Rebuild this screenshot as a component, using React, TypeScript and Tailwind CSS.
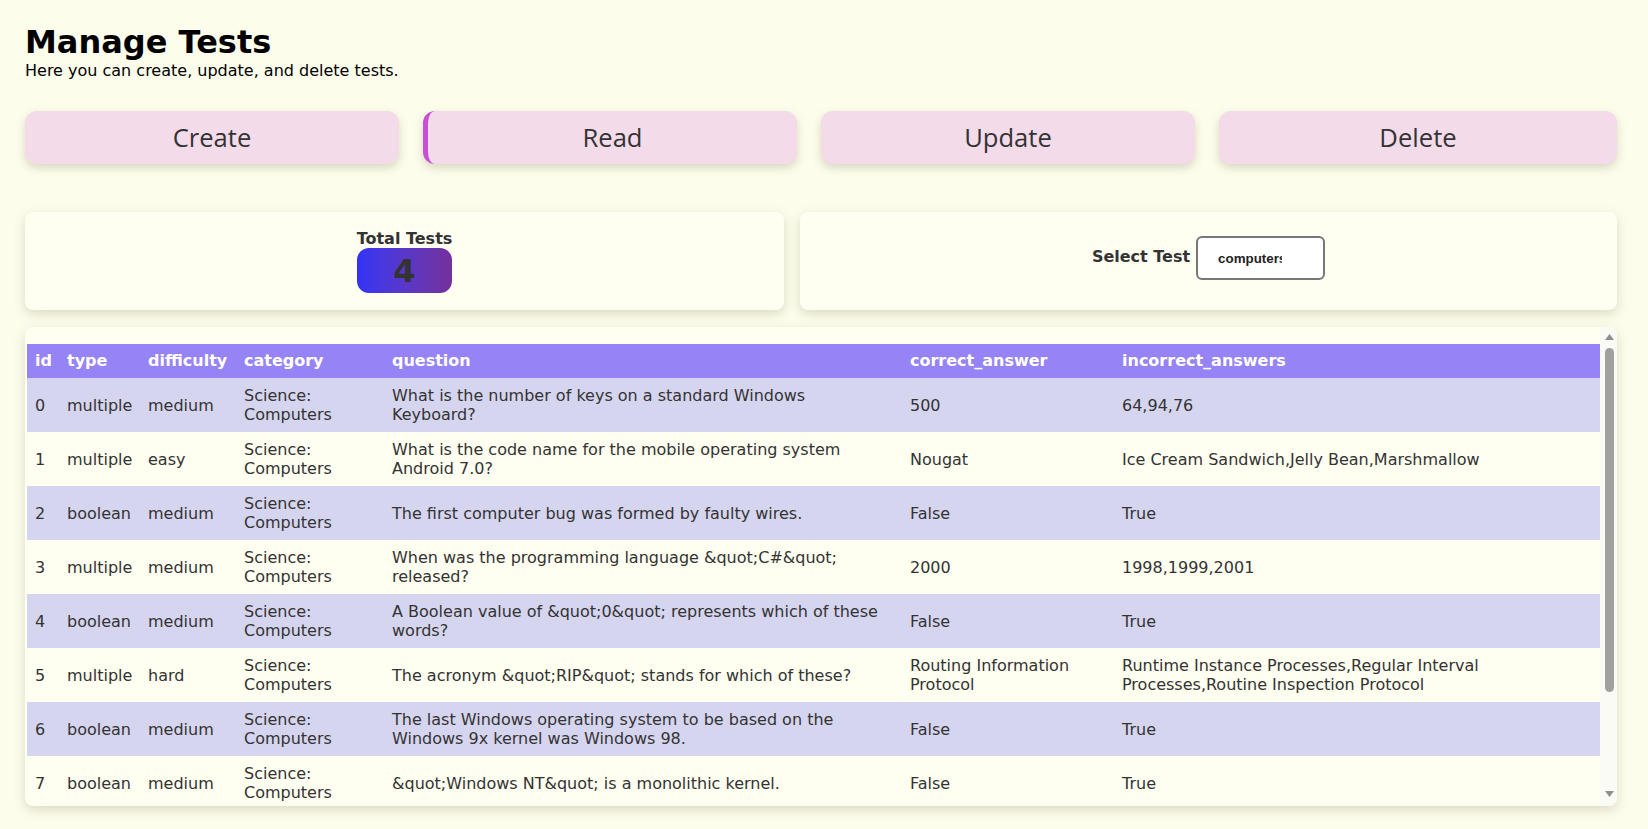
import { useState } from "react";

type Row = {
  id: number;
  type: string;
  difficulty: string;
  category: string;
  question: string;
  correct_answer: string;
  incorrect_answers: string[];
};

const TESTS: Row[] = [
  { id: 0, type: "multiple", difficulty: "medium", category: "Science: Computers", question: "What is the number of keys on a standard Windows Keyboard?", correct_answer: "500", incorrect_answers: ["64", "94", "76"] },
  { id: 1, type: "multiple", difficulty: "easy", category: "Science: Computers", question: "What is the code name for the mobile operating system Android 7.0?", correct_answer: "Nougat", incorrect_answers: ["Ice Cream Sandwich", "Jelly Bean", "Marshmallow"] },
  { id: 2, type: "boolean", difficulty: "medium", category: "Science: Computers", question: "The first computer bug was formed by faulty wires.", correct_answer: "False", incorrect_answers: ["True"] },
  { id: 3, type: "multiple", difficulty: "medium", category: "Science: Computers", question: "When was the programming language &quot;C#&quot; released?", correct_answer: "2000", incorrect_answers: ["1998", "1999", "2001"] },
  { id: 4, type: "boolean", difficulty: "medium", category: "Science: Computers", question: "A Boolean value of &quot;0&quot; represents which of these words?", correct_answer: "False", incorrect_answers: ["True"] },
  { id: 5, type: "multiple", difficulty: "hard", category: "Science: Computers", question: "The acronym &quot;RIP&quot; stands for which of these?", correct_answer: "Routing Information Protocol", incorrect_answers: ["Runtime Instance Processes", "Regular Interval Processes", "Routine Inspection Protocol"] },
  { id: 6, type: "boolean", difficulty: "medium", category: "Science: Computers", question: "The last Windows operating system to be based on the Windows 9x kernel was Windows 98.", correct_answer: "False", incorrect_answers: ["True"] },
  { id: 7, type: "boolean", difficulty: "medium", category: "Science: Computers", question: "&quot;Windows NT&quot; is a monolithic kernel.", correct_answer: "False", incorrect_answers: ["True"] },
  { id: 8, type: "multiple", difficulty: "easy", category: "Science: Computers", question: "What does CPU stand for?", correct_answer: "Central Processing Unit", incorrect_answers: ["Central Process Unit", "Computer Personal Unit", "Central Processor Unit"] },
  { id: 9, type: "boolean", difficulty: "easy", category: "Science: Computers", question: "Linux was first created as an alternative to Windows XP.", correct_answer: "False", incorrect_answers: ["True"] },
];

const ACTIONS = ["Create", "Read", "Update", "Delete"];

export default function App() {
  const [active, setActive] = useState("Read");
  const [search, setSearch] = useState("computers");

  return (
    <div className="h-screen overflow-hidden bg-[#fdfdec] pl-[25px] pr-[31px] pt-[23px] text-[#333] font-['DejaVu_Sans',sans-serif]">
      <h1 className="text-[32px] font-bold leading-[normal] text-black">Manage Tests</h1>
      <p className="text-[16px] leading-[normal] text-black">Here you can create, update, and delete tests.</p>

      <div className="mt-[31px] flex h-[53px] gap-6">
        {ACTIONS.map((a, i) => (
          <button
            key={a}
            onClick={() => setActive(a)}
            className={
              (i === 3 ? "flex-1 " : "w-[374px] ") +
              (active === a ? "border-l-[5px] border-[#c64fd4] " : "") +
              "rounded-xl bg-[#f3dbea] text-[25.6px] leading-[normal] text-[#333] font-['Open_Sans',sans-serif] shadow-[0_4px_10px_rgba(80,80,40,0.22)]"
            }
          >
            {a}
          </button>
        ))}
      </div>

      <div className="mt-[48px] flex h-[98px] gap-4">
        <div className="flex w-[759px] flex-col items-center justify-center rounded-lg bg-[#fefef1] shadow-[0_4px_12px_rgba(80,80,40,0.2)]">
          <div className="flex flex-col items-stretch">
            <span className="text-[16px] font-bold leading-[19px]">Total Tests</span>
            <span className="flex h-[45px] items-center justify-center rounded-xl bg-linear-to-r from-[#3333f6] to-[#742f9c] text-[32px] font-bold leading-none text-[#333]">
              4
            </span>
          </div>
        </div>
        <div className="flex flex-1 items-center justify-center gap-[6px] rounded-lg bg-[#fefef1] pb-[8px] shadow-[0_4px_12px_rgba(80,80,40,0.2)]">
          <label className="text-[16px] font-bold" htmlFor="test-select">Select Test</label>
          <input
            id="test-select"
            value={search}
            onChange={(e) => setSearch(e.target.value)}
            className="mt-[2px] h-[44px] w-[129px] rounded-[6px] border-2 border-[#777] bg-white pl-5 pr-[41px] text-[13.33px] font-semibold text-[#222] font-['Liberation_Sans',sans-serif] outline-none"
          />
        </div>
      </div>

      <div className="relative mt-[17px] h-[479px] overflow-hidden rounded-lg bg-[#fefef1] shadow-[0_4px_12px_rgba(80,80,40,0.2)]">
        <div className="h-full overflow-y-auto pt-[17px] pl-[2px] pb-4">
          <table className="w-[1573px] table-fixed text-left text-[16px]">
            <colgroup>
              <col className="w-[32px]" />
              <col className="w-[81px]" />
              <col className="w-[96px]" />
              <col className="w-[148px]" />
              <col className="w-[518px]" />
              <col className="w-[212px]" />
              <col />
            </colgroup>
            <thead>
              <tr className="bg-[#9683f5] text-white">
                {["id", "type", "difficulty", "category", "question", "correct_answer", "incorrect_answers"].map((h) => (
                  <th key={h} className="px-2 py-2 font-bold leading-[18px]">{h}</th>
                ))}
              </tr>
            </thead>
            <tbody>
              {TESTS.map((t) => (
                <tr key={t.id} className={t.id % 2 === 0 ? "bg-[#d6d5f0]" : ""}>
                  <td className="px-2 py-2 leading-[19px]">{t.id}</td>
                  <td className="px-2 py-2 leading-[19px]">{t.type}</td>
                  <td className="px-2 py-2 leading-[19px]">{t.difficulty}</td>
                  <td className="px-2 py-2 leading-[19px]">{t.category}</td>
                  <td className="py-2 pl-2 pr-4 leading-[19px]">{t.question}</td>
                  <td className="px-2 py-2 leading-[19px]">{t.correct_answer}</td>
                  <td className="px-2 py-2 leading-[19px]">{t.incorrect_answers.join(",")}</td>
                </tr>
              ))}
            </tbody>
          </table>
        </div>

        {/* scrollbar drawn over the right edge */}
        <div className="pointer-events-none absolute top-0 right-0 bottom-0 w-[17px] bg-[#fbfbf6]">
          <svg className="absolute top-[7px] left-[5px]" width="9" height="6" viewBox="0 0 9 6">
            <path d="M4.5 0 L9 6 L0 6 Z" fill="#8f8f8f" />
          </svg>
          <div className="absolute top-[21px] left-[5px] h-[344px] w-[9px] rounded-full bg-[#a0a0a0]" />
          <svg className="absolute top-[464px] left-[5px]" width="9" height="6" viewBox="0 0 9 6">
            <path d="M0 0 L9 0 L4.5 6 Z" fill="#8f8f8f" />
          </svg>
        </div>
      </div>
    </div>
  );
}
